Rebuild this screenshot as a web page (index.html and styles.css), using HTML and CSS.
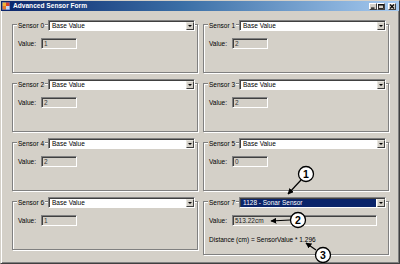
FILE: index.html
```html
<!DOCTYPE html>
<html>
<head>
<meta charset="utf-8">
<link rel="stylesheet" href="styles.css">
</head>
<body>
<div class="window">
  <div class="titlebar">
    <svg class="appicon" width="8" height="8" viewBox="0 0 8 8">
      <rect x="0" y="0" width="8" height="8" fill="#3a5fbf"/>
      <rect x="0.5" y="0.5" width="3.5" height="3.5" fill="#f2b233"/>
      <rect x="4" y="0.5" width="3.5" height="3.5" fill="#d8402a"/>
      <rect x="0.5" y="4" width="3.5" height="3.5" fill="#e77a2c"/>
      <rect x="4" y="4" width="3.5" height="3.5" fill="#c9d6f0"/>
    </svg>
    <span class="title">Advanced Sensor Form</span>
    <div class="caption-buttons">
      <span class="cbtn"><svg width="6" height="5" viewBox="0 0 6 5"><rect x="1" y="3.5" width="3.5" height="1.2" fill="#000"/></svg></span>
      <span class="cbtn"><svg width="6" height="5" viewBox="0 0 6 5"><rect x="0.5" y="0.5" width="5" height="4" fill="none" stroke="#000" stroke-width="0.8"/><rect x="0.5" y="0.3" width="5" height="1.2" fill="#000"/></svg></span>
      <span class="cbtn close"><svg width="6" height="5" viewBox="0 0 6 5"><path d="M1 0.5 L5 4.5 M5 0.5 L1 4.5" stroke="#000" stroke-width="1.1"/></svg></span>
    </div>
  </div>
  <div class="client">
    <div class="group">
      <div class="head"><span class="legend">Sensor 0</span><div class="combo"><span class="combo-text">Base Value</span><span class="drop"><svg width="4" height="2" viewBox="0 0 4 2"><path d="M0 0 H4 L2 2 Z" fill="#000"/></svg></span></div></div>
      <div class="row"><span class="label">Value:</span><span class="textbox">1</span></div>
    </div>
    <div class="group">
      <div class="head"><span class="legend">Sensor 1</span><div class="combo"><span class="combo-text">Base Value</span><span class="drop"><svg width="4" height="2" viewBox="0 0 4 2"><path d="M0 0 H4 L2 2 Z" fill="#000"/></svg></span></div></div>
      <div class="row"><span class="label">Value:</span><span class="textbox">2</span></div>
    </div>
    <div class="group">
      <div class="head"><span class="legend">Sensor 2</span><div class="combo"><span class="combo-text">Base Value</span><span class="drop"><svg width="4" height="2" viewBox="0 0 4 2"><path d="M0 0 H4 L2 2 Z" fill="#000"/></svg></span></div></div>
      <div class="row"><span class="label">Value:</span><span class="textbox">2</span></div>
    </div>
    <div class="group">
      <div class="head"><span class="legend">Sensor 3</span><div class="combo"><span class="combo-text">Base Value</span><span class="drop"><svg width="4" height="2" viewBox="0 0 4 2"><path d="M0 0 H4 L2 2 Z" fill="#000"/></svg></span></div></div>
      <div class="row"><span class="label">Value:</span><span class="textbox">2</span></div>
    </div>
    <div class="group">
      <div class="head"><span class="legend">Sensor 4</span><div class="combo"><span class="combo-text">Base Value</span><span class="drop"><svg width="4" height="2" viewBox="0 0 4 2"><path d="M0 0 H4 L2 2 Z" fill="#000"/></svg></span></div></div>
      <div class="row"><span class="label">Value:</span><span class="textbox">2</span></div>
    </div>
    <div class="group">
      <div class="head"><span class="legend">Sensor 5</span><div class="combo"><span class="combo-text">Base Value</span><span class="drop"><svg width="4" height="2" viewBox="0 0 4 2"><path d="M0 0 H4 L2 2 Z" fill="#000"/></svg></span></div></div>
      <div class="row"><span class="label">Value:</span><span class="textbox">0</span></div>
    </div>
    <div class="group">
      <div class="head"><span class="legend">Sensor 6</span><div class="combo"><span class="combo-text">Base Value</span><span class="drop"><svg width="4" height="2" viewBox="0 0 4 2"><path d="M0 0 H4 L2 2 Z" fill="#000"/></svg></span></div></div>
      <div class="row"><span class="label">Value:</span><span class="textbox">1</span></div>
    </div>
    <div class="group tall">
      <div class="head"><span class="legend">Sensor 7</span><div class="combo selected"><span class="combo-text">1128 - Sonar Sensor</span><span class="drop"><svg width="4" height="2" viewBox="0 0 4 2"><path d="M0 0 H4 L2 2 Z" fill="#000"/></svg></span></div></div>
      <div class="row"><span class="label">Value:</span><span class="textbox wide">513.22cm</span></div>
      <div class="note">Distance (cm) = SensorValue * 1.296</div>
    </div>
  </div>
  <svg class="callouts" width="400" height="264" viewBox="0 0 400 264">
    <defs>
      <marker id="ah" viewBox="0 0 10 10" refX="9" refY="5" markerWidth="6" markerHeight="6" markerUnits="userSpaceOnUse" orient="auto">
        <path d="M0 0 L10 5 L0 10 Z" fill="#000"/>
      </marker>
    </defs>
    <line x1="301" y1="180" x2="288" y2="194" stroke="#000" stroke-width="1.2" marker-end="url(#ah)"/>
    <line x1="290" y1="220" x2="271" y2="221" stroke="#000" stroke-width="1.2" marker-end="url(#ah)"/>
    <line x1="316" y1="250" x2="306" y2="243" stroke="#000" stroke-width="1.2" marker-end="url(#ah)"/>
    <circle cx="306" cy="174" r="7.5" fill="#fff" stroke="#000" stroke-width="1.3"/>
    <circle cx="298" cy="220" r="7.5" fill="#fff" stroke="#000" stroke-width="1.3"/>
    <circle cx="323" cy="255" r="7.5" fill="#fff" stroke="#000" stroke-width="1.3"/>
    <text x="306" y="177.8" class="num">1</text>
    <text x="298" y="223.8" class="num">2</text>
    <text x="323" y="258.8" class="num">3</text>
  </svg>
</div>
</body>
</html>
```
FILE: styles.css
```css
html, body {
  margin: 0;
  padding: 0;
  background: #d4d0c8;
}
body {
  font-family: "Liberation Sans", Arial, sans-serif;
  font-size: 6.5px;
  color: #000;
}
.window {
  position: relative;
  width: 400px;
  height: 264px;
  box-sizing: border-box;
  border: 1px solid;
  border-color: #d4d0c8 #404040 #404040 #d4d0c8;
  box-shadow: inset 1px 1px 0 #fff, inset -1px -1px 0 #808080;
  background: #d4d0c8;
  overflow: hidden;
}
.titlebar {
  height: 10px;
  display: flex;
  align-items: center;
  padding-left: 1px;
  background: linear-gradient(90deg, #0a246a 0%, #3a6ea5 45%, #a6caf0 100%);
}
.appicon {
  display: block;
  margin-right: 3px;
}
.title {
  color: #fff;
  font-weight: bold;
  font-size: 6.6px;
  line-height: 10px;
  flex: 1;
}
.caption-buttons {
  display: flex;
  align-items: center;
  margin-right: 3px;
}
.cbtn {
  width: 8px;
  height: 7px;
  box-sizing: border-box;
  background: #d4d0c8;
  border: 1px solid;
  border-color: #fff #404040 #404040 #fff;
  display: flex;
  align-items: center;
  justify-content: center;
}
.cbtn svg {
  display: block;
}
.cbtn.close {
  margin-left: 3px;
}
.client {
  display: grid;
  grid-template-columns: 186px 186px;
  column-gap: 5px;
  row-gap: 10px;
  padding: 13px 0 0 11px;
  align-items: start;
}
.group {
  height: 49px;
  box-sizing: border-box;
  border: 1px solid #808080;
  box-shadow: inset 1px 1px 0 #fff, 1px 1px 0 #fff;
  padding: 0 2px 0 4px;
}
.group.tall {
  height: 54px;
}
.head {
  display: flex;
  align-items: center;
  height: 11px;
  margin-top: -5px;
}
.legend {
  background: #d4d0c8;
  padding: 0 1px;
  margin-right: 3px;
  line-height: 8px;
  white-space: nowrap;
}
.combo {
  flex: 1;
  height: 11px;
  box-sizing: border-box;
  background: #fff;
  border: 1px solid;
  border-color: #808080 #fff #fff #808080;
  box-shadow: inset 1px 1px 0 #404040;
  display: flex;
  align-items: stretch;
  padding: 1px 0 0 1px;
}
.combo-text {
  flex: 1;
  padding-left: 2px;
  line-height: 8px;
  white-space: nowrap;
}
.combo.selected .combo-text {
  background: #0a246a;
  color: #fff;
  margin: 0 1px 0 0;
}
.drop {
  width: 8px;
  box-sizing: border-box;
  background: #d4d0c8;
  border: 1px solid;
  border-color: #e8e6e0 #404040 #404040 #e8e6e0;
  display: flex;
  align-items: center;
  justify-content: center;
}
.drop svg {
  display: block;
}
.row {
  display: flex;
  align-items: center;
  margin-top: 7px;
}
.label {
  width: 24px;
  box-sizing: border-box;
  padding-left: 1px;
  line-height: 8px;
}
.textbox {
  width: 36px;
  height: 11px;
  box-sizing: border-box;
  border: 1px solid;
  border-color: #808080 #fff #fff #808080;
  box-shadow: inset 1px 1px 0 #404040;
  padding-left: 2px;
  line-height: 9px;
  color: #3a3a3a;
  white-space: nowrap;
}
.textbox.wide {
  width: 145px;
  color: #222;
}
.note {
  margin-top: 10px;
  padding-left: 1px;
  line-height: 8px;
  white-space: nowrap;
}
.callouts {
  position: absolute;
  left: -1px;
  top: -1px;
  pointer-events: none;
}
.num {
  font-family: "Liberation Sans", Arial, sans-serif;
  font-weight: bold;
  font-size: 10.5px;
  text-anchor: middle;
  fill: #000;
}
```
